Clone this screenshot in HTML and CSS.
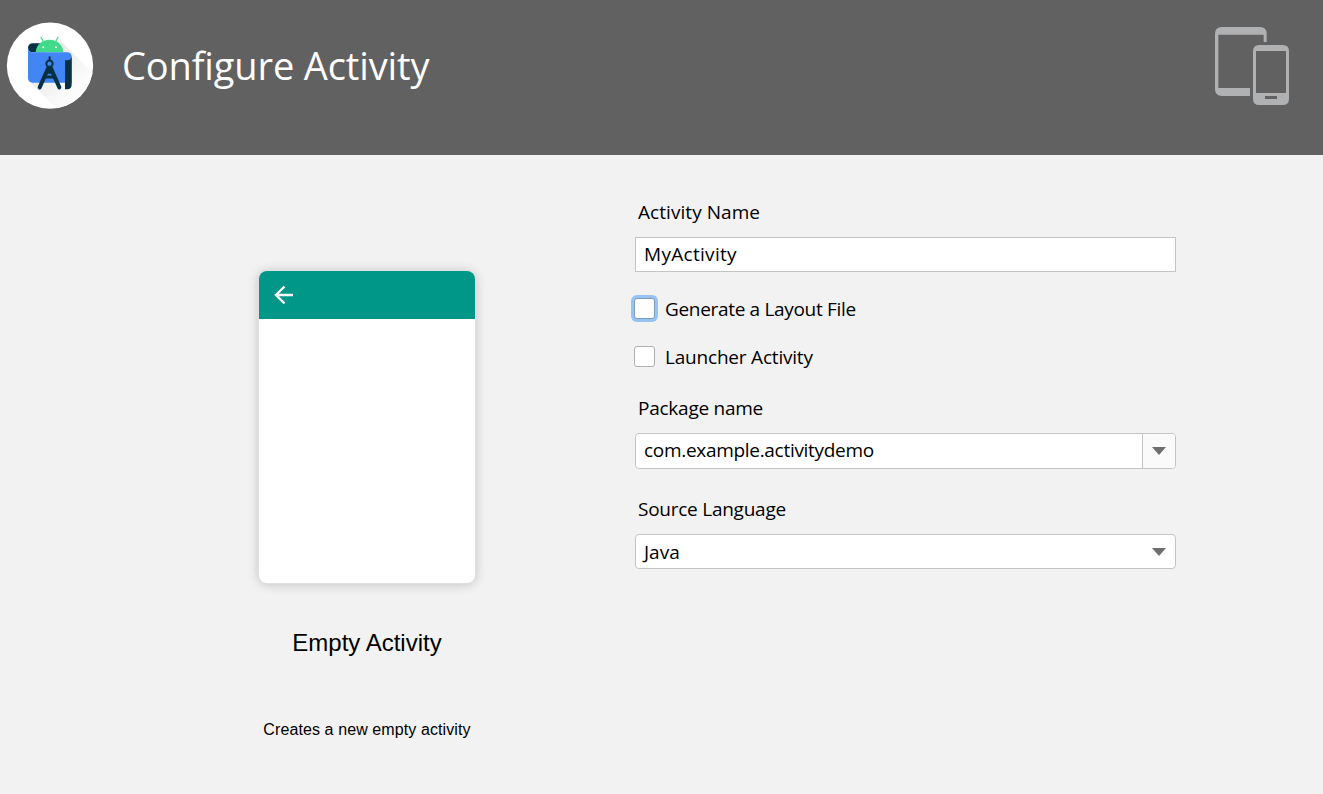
FILE: index.html
```html
<!DOCTYPE html>
<html lang="en">
<head>
<meta charset="utf-8">
<title>Configure Activity</title>
<link rel="stylesheet" href="styles.css">
</head>
<body>
<header class="header">
  <svg class="logo" viewBox="0 0 300 300" aria-hidden="true">
    <defs>
      <linearGradient id="fade" gradientUnits="userSpaceOnUse" x1="130" y1="130" x2="225" y2="225">
        <stop offset="0" stop-color="#e6e6e6"/>
        <stop offset="1" stop-color="#fcfcfc"/>
      </linearGradient>
      <clipPath id="disc"><circle cx="150" cy="152" r="129"/></clipPath>
    </defs>
    <circle cx="150" cy="152" r="129.500" fill="#fff"/>
    <g clip-path="url(#disc)">
      <path d="M180 76L300 196V300H190L86 197L190 130Z" fill="url(#fade)"/>
    </g>
    <path d="M98 85H135V112H98C90 112 84 107 84 99C84 91 90 85 98 85Z" fill="#073042"/>
    <path d="M123 67L133 84M174 67L165 84" stroke="#3ddc84" stroke-width="3.500" stroke-linecap="round"/>
    <path d="M107 112C108 89 126 74 149 74S189 89 190 112Z" fill="#41d98a"/>
    <circle cx="130" cy="97" r="3" fill="#fff"/><circle cx="168" cy="97" r="3" fill="#fff"/>
    <path d="M84 99C84 107 90 112 98 112H202C210 112 215 117 215 125V203H98C90 203 84 198 84 190Z" fill="#4285f4"/>
    <path d="M215 122V209C215 218 209 223 202 223H195V136H203C210 136 215 130 215 122Z" fill="#073042"/>
    <g fill="none" stroke="#073042" stroke-linecap="round">
      <circle cx="148.500" cy="146" r="9.500" stroke-width="6"/>
      <path d="M149 127V136" stroke-width="6"/>
      <path d="M144 161L119 217M153 161L178 217" stroke-width="12"/>
      <path d="M131 186H167" stroke-width="9" stroke-linecap="butt"/>
    </g>
    <path d="M141 156H157L165 176H133Z" fill="#073042"/>
  </svg>
  <h1 class="title">Configure Activity</h1>
  <svg class="devices" viewBox="0 0 300 300" aria-hidden="true">
    <path fill="#afb1b3" fill-rule="evenodd" d="M66 36H180Q200 36 200 56V81H191V59H55V219H150V243H66Q45 243 45 222V57Q45 36 66 36Z"/>
    <path fill="#afb1b3" fill-rule="evenodd" d="M178 90H248Q267 90 267 109V251Q267 270 248 270H178Q159 270 159 251V109Q159 90 178 90ZM168 108V234H258V108ZM195 243V252H231V243Z"/>
  </svg>
</header>
<main class="content">
  <section class="preview">
    <div class="phone">
      <div class="phone-bar">
        <svg class="back" viewBox="0 0 20 20" aria-hidden="true"><path d="M19 10H2M10.500 1.500L2 10L10.500 18.500" fill="none" stroke="#fff" stroke-width="2.400"/></svg>
      </div>
    </div>
    <h2 class="template-name">Empty Activity</h2>
    <p class="template-text">Creates a new empty activity</p>
  </section>
  <form class="form">
    <div class="label"><span class="t-activity">Activity Name</span></div>
    <div class="field"><span class="t-my">MyActivity</span></div>
    <div class="check first"><span class="box focused"></span><span class="t-generate">Generate a Layout File</span></div>
    <div class="check second"><span class="box"></span><span class="t-launcher">Launcher Activity</span></div>
    <div class="label package"><span class="t-package">Package name</span></div>
    <div class="field combo"><span class="t-com">com.example.activitydemo</span><span class="arrow-cell"><svg class="arrow" viewBox="0 0 14 8"><path d="M0 0H14L7 8Z" fill="#6e6e6e"/></svg></span></div>
    <div class="label source"><span class="t-source">Source Language</span></div>
    <div class="field select"><span>Java</span><svg class="arrow" viewBox="0 0 14 8"><path d="M0 0H14L7 8Z" fill="#6e6e6e"/></svg></div>
  </form>
</main>
</body>
</html>
```
FILE: styles.css
```css
* { box-sizing: border-box; }
body {
  margin: 0;
  height: 794px;
  overflow: hidden;
  background: #f2f2f2;
  color: #000;
  font: 19px/24px "Open Sans", "Noto Sans", sans-serif;
}
.header {
  display: flex;
  align-items: flex-start;
  height: 155px;
  padding-top: 15px;
  background: #616161;
}
.logo, .devices { width: 100px; height: 100px; flex: none; }
.devices { margin: 0 23px 0 auto; }
.title {
  margin: 24px 0 0 22px;
  color: #fff;
  font-size: 38px;
  font-weight: 400;
  line-height: 52px;
  letter-spacing: -.13px;
  white-space: nowrap;
}
.content { display: grid; grid-template-columns: 635px 541px; }
.preview {
  display: flex;
  flex-direction: column;
  align-items: center;
  width: 216px;
  margin: 116px 0 0 259px;
  font-family: "Liberation Sans", Arial, sans-serif;
  white-space: nowrap;
}
.phone {
  width: 216px;
  height: 312px;
  overflow: hidden;
  border-radius: 8px;
  background: #fff;
  box-shadow: 0 0 0 1px #e0e0e0, 0 1px 12px rgba(0, 0, 0, .22);
}
.phone-bar { height: 48px; padding: 14px 15px; background: #009688; }
.back { display: block; width: 20px; height: 20px; }
.template-name { margin: 44px 0 0; font-size: 24px; font-weight: 400; line-height: 32px; }
.template-text { margin: 61px 0 0; font-size: 16px; line-height: 20px; letter-spacing: .1px; }
.form { padding-top: 45px; white-space: nowrap; }
.label { height: 24px; padding-left: 3px; }
.field {
  display: flex;
  align-items: center;
  height: 35px;
  margin-top: 13px;
  padding-left: 8px;
  border: 1px solid #c4c4c4;
  background: #fff;
}
.t-activity { letter-spacing: .06px; }
.t-my { padding-bottom: 2px; letter-spacing: .3px; }
.t-generate { letter-spacing: -.32px; }
.t-launcher { letter-spacing: -.2px; }
.t-package { letter-spacing: -.25px; }
.t-com { padding-bottom: 2px; letter-spacing: -.3px; }
.t-source { letter-spacing: -.25px; }
.check { display: flex; align-items: center; height: 24px; gap: 10px; }
.first { margin-top: 25px; }
.second { margin-top: 24px; }
.box {
  width: 21px;
  height: 21px;
  margin: 0 0 2px -1px;
  border: 1px solid #b0b0b0;
  border-radius: 3px;
  background: #fff;
}
.focused { border-color: #7b9ebd; box-shadow: 0 0 0 3px #97c3f3; }
.package { margin-top: 27px; }
.combo { height: 36px; margin-top: 13px; border-radius: 4px; overflow: hidden; }
.arrow-cell {
  display: flex;
  align-items: center;
  justify-content: center;
  width: 33px;
  height: 100%;
  margin-left: auto;
  border-left: 1px solid #c4c4c4;
  background: #fafafa;
}
.arrow { width: 14px; height: 8px; }
.source { margin-top: 28px; }
.select { border-radius: 4px; }
.select .arrow { margin: 0 9px 0 auto; }
```
